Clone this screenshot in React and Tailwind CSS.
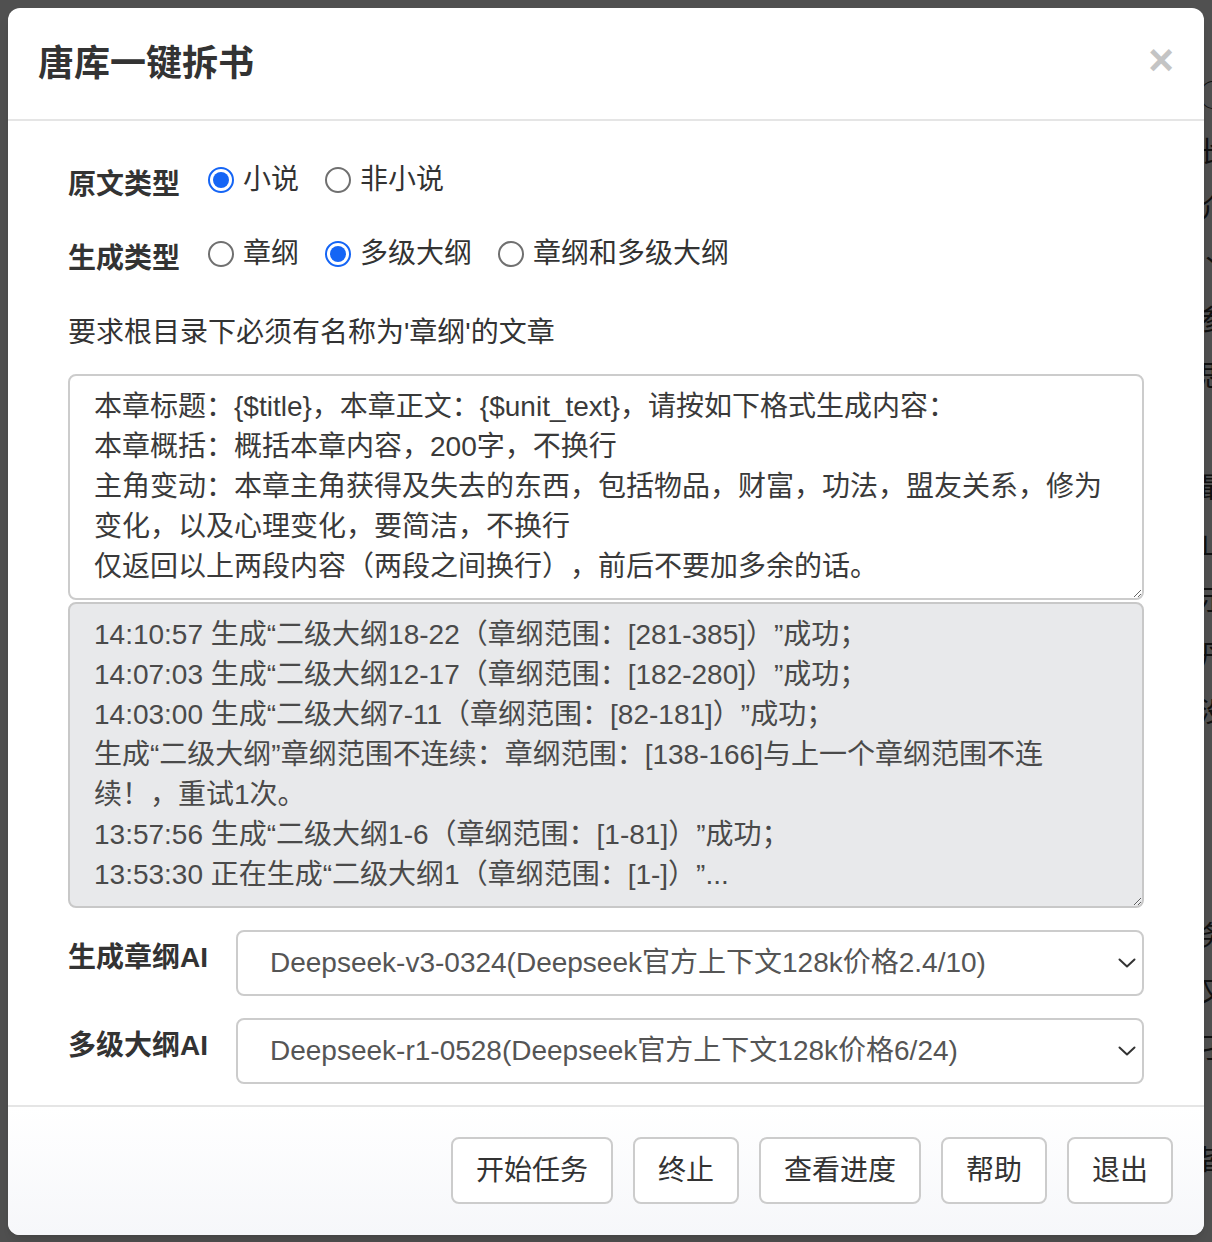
import React from 'react';

const FONT = 'font-[family-name:Liberation_Sans,Noto_Sans_CJK_SC,sans-serif]';

const PROMPT = [
  '本章标题：{$title}，本章正文：{$unit_text}，请按如下格式生成内容：',
  '本章概括：概括本章内容，200字，不换行',
  '主角变动：本章主角获得及失去的东西，包括物品，财富，功法，盟友关系，修为',
  '变化，以及心理变化，要简洁，不换行',
  '仅返回以上两段内容（两段之间换行），前后不要加多余的话。',
].join('\n');

const LOG = [
  '14:10:57 生成“二级大纲18-22（章纲范围：[281-385]）”成功；',
  '14:07:03 生成“二级大纲12-17（章纲范围：[182-280]）”成功；',
  '14:03:00 生成“二级大纲7-11（章纲范围：[82-181]）”成功；',
  '生成“二级大纲”章纲范围不连续：章纲范围：[138-166]与上一个章纲范围不连',
  '续！，重试1次。',
  '13:57:56 生成“二级大纲1-6（章纲范围：[1-81]）”成功；',
  '13:53:30 正在生成“二级大纲1（章纲范围：[1-]）”...',
].join('\n');

const Radio = ({ checked, label }) => (
  <label className="flex items-center gap-[9px] cursor-pointer">
    {checked ? (
      <span className="w-[26px] h-[26px] rounded-full border-2 border-[#1565f5] bg-white flex items-center justify-center">
        <span className="w-[16px] h-[16px] rounded-full bg-[#1565f5]" />
      </span>
    ) : (
      <span className="w-[26px] h-[26px] rounded-full border-2 border-[#707070] bg-white" />
    )}
    <span>{label}</span>
  </label>
);

const Select = ({ value }) => (
  <div className="flex-1 h-[66px] border-2 border-[#cccccc] rounded-[8px] bg-white flex items-center justify-between pl-[32px] pr-[6px] text-[#555]">
    <span>{value}</span>
    <svg width="18" height="10" viewBox="0 0 18 10" fill="none">
      <path d="M1.5 1.5l7.5 7 7.5-7" stroke="#333" strokeWidth="2" strokeLinecap="round" strokeLinejoin="round" />
    </svg>
  </div>
);

const Btn = ({ children }) => (
  <button className="h-[67px] px-[23px] border-2 border-[#cccccc] rounded-[8px] bg-white text-[#333] text-[28px]">
    {children}
  </button>
);

const behind = ['◯', '长', '介', '丶', '参', '思', '', '最', '止', '示', '丹', '没', '', '', '刂', '务', '又', '孑', '', '皆'];

export default function App() {
  return (
    <div className={`relative min-h-[1242px] bg-[#505050] overflow-hidden [text-spacing-trim:space-all] ${FONT}`}>
      {/* page behind the overlay */}
      <div className="absolute left-[1199px] top-[80px] flex flex-col gap-[22px] text-[28px] leading-[34px] text-[#111]">
        {behind.map((c, i) => (
          <span key={i} className="h-[34px]">{c}</span>
        ))}
      </div>

      <div className="relative mx-[8px] mt-[8px] w-[1196px] h-[1227px] bg-white rounded-[12px] flex flex-col overflow-hidden shadow-lg">
        {/* header */}
        <div className="h-[113px] shrink-0 border-b-2 border-[#e5e5e5] flex items-center justify-between pl-[30px] pr-[30px]">
          <h4 className="text-[36px] font-bold text-[#333] leading-none">唐库一键拆书</h4>
          <span className="text-[44px] font-bold text-[#c4c4c4] leading-none -mt-[8px]">×</span>
        </div>

        {/* body */}
        <div className="flex-1 px-[60px] pt-[39px] text-[28px] leading-[40px] text-[#333]">
          <div className="flex items-start gap-[28px]">
            <span className="pt-[5px] font-bold">原文类型</span>
            <div className="flex items-center gap-[26px]">
              <Radio checked label="小说" />
              <Radio label="非小说" />
            </div>
          </div>

          <div className="flex items-start gap-[28px] mt-[29px]">
            <span className="pt-[5px] font-bold">生成类型</span>
            <div className="flex items-center gap-[26px]">
              <Radio label="章纲" />
              <Radio checked label="多级大纲" />
              <Radio label="章纲和多级大纲" />
            </div>
          </div>

          <p className="mt-[34px]">要求根目录下必须有名称为'章纲'的文章</p>

          <textarea
            readOnly
            wrap="off"
            value={PROMPT}
            className="block w-full h-[226px] mt-[21px] border-2 border-[#cccccc] rounded-[8px] px-[24px] py-[11px] text-[28px] leading-[40px] text-[#3a3a3a] bg-white overflow-hidden outline-none"
          />
          <textarea
            readOnly
            wrap="off"
            value={LOG}
            className="block w-full h-[306px] mt-[2px] border-2 border-[#c8c8c8] rounded-[8px] px-[24px] py-[11px] text-[28px] leading-[40px] text-[#4a4a4a] bg-[#e8e9eb] overflow-hidden outline-none"
          />

          <div className="flex items-start mt-[22px]">
            <span className="w-[168px] shrink-0 pt-[8px] font-bold">生成章纲AI</span>
            <Select value="Deepseek-v3-0324(Deepseek官方上下文128k价格2.4/10)" />
          </div>
          <div className="flex items-start mt-[22px]">
            <span className="w-[168px] shrink-0 pt-[8px] font-bold">多级大纲AI</span>
            <Select value="Deepseek-r1-0528(Deepseek官方上下文128k价格6/24)" />
          </div>
        </div>

        {/* footer */}
        <div className="h-[130px] shrink-0 border-t-2 border-[#e5e5e5] bg-linear-to-b from-white to-[#f6f7fa] flex items-start justify-end gap-[20px] pt-[30px] pr-[31px]">
          <Btn>开始任务</Btn>
          <Btn>终止</Btn>
          <Btn>查看进度</Btn>
          <Btn>帮助</Btn>
          <Btn>退出</Btn>
        </div>
      </div>
    </div>
  );
}
